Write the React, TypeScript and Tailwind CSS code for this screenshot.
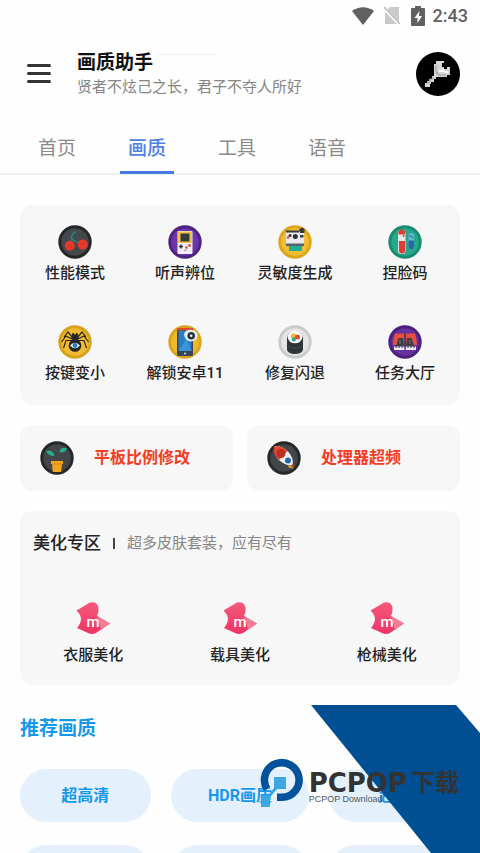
import type { ReactNode } from "react";

type IconProps = { children: ReactNode; rim: string; fill: string };

const Badge = ({ children, rim, fill }: IconProps) => (
  <svg viewBox="0 0 34 34" className="size-[34px] shrink-0" aria-hidden="true">
    <circle cx="17" cy="17" r="16.7" fill={rim} />
    <circle cx="17" cy="17" r="13.8" fill={fill} />
    {children}
  </svg>
);

const CherryIcon = () => (
  <Badge rim="#242627" fill="#45484a">
    <path d="M18 6.5C13.5 9 12.5 12 14.5 14.5S19 17 23 18M14.5 14.5 11.5 18" fill="none" stroke="#278177" strokeWidth="1.8" />
    <circle cx="11.8" cy="20.8" r="5" fill="#e5392c" />
    <circle cx="24.7" cy="19.6" r="5" fill="#e5392c" />
    <path d="m10.5 20 2 1M23.5 19l2 1" stroke="#b5342a" strokeWidth="1.2" />
  </Badge>
);

const ConsoleIcon = () => (
  <Badge rim="#4d2180" fill="#6d35ab">
    <rect x="9.5" y="6" width="15" height="23" rx="1" fill="#f2eef4" />
    <rect x="10" y="6.5" width="14" height="11.5" fill="#f1c542" />
    <rect x="12.5" y="8.5" width="9" height="8" fill="#343b40" />
    <path d="M11 21.5h4M13 19.5v4" stroke="#2b3140" strokeWidth="1.5" />
    <circle cx="21.5" cy="20.5" r="1.4" fill="#df4a48" />
    <circle cx="18.5" cy="22.5" r="1.3" fill="#df4a48" />
    <path d="m16 26 3-1.5" stroke="#98909f" />
  </Badge>
);

const PrinterIcon = () => (
  <Badge rim="#dda51d" fill="#f3bd33">
    <path d="M8 7h18v12H8z" fill="#e9eced" />
    <path d="M8 5.5h13v2H8zM21 4.5l3-2 2.5 1.5V8H22z" fill="#343b40" />
    <path d="M8 18.5h18V21H8z" fill="#53616a" />
    <path d="M11 21h13v5H11z" fill="#20ad92" />
    <circle cx="17.3" cy="11.5" r="2.5" fill="#293238" />
    <circle cx="12" cy="10.5" r="1.5" fill="#293238" />
    <circle cx="10" cy="12.5" r="1.3" fill="#df4a48" />
    <path d="M22 10h3.5v2.5H22z" fill="#343b40" />
  </Badge>
);

const TubesIcon = () => (
  <Badge rim="#188b72" fill="#25a98a">
    <rect x="10" y="5" width="7.5" height="24" rx="3.5" fill="#e7e9e8" />
    <path d="M10.5 6.5Q13.5 1.5 17 6.5v3h-6.5zM11 16h6v9.5a3 3 0 0 1-6 0z" fill="#df3d35" />
    <circle cx="15.7" cy="11" r="1" fill="#df3d35" />
    <rect x="20.5" y="8" width="5.5" height="16" rx="2.7" fill="#65b4cf" />
    <path d="M21 16h4.5v5.5a2.2 2.2 0 0 1-4.5 0zM21 10.5l4 2" fill="#2865ac" stroke="#2865ac" />
  </Badge>
);

const SpiderIcon = () => (
  <Badge rim="#d8a11b" fill="#f0bb30">
    <path
      d="M15 13 10 7 6 12M14 14 8 11 3.5 17M14 15.5H8L5.5 23M19 13l5-6 4 5M20 14l6-3 4.5 6M20 15.5h6l2.5 7.5"
      fill="none"
      stroke="#292722"
      strokeWidth="1.2"
    />
    <path d="M14.5 8h1.2l1.3 2 1.3-2h1.2l1.3 5-2 4h-3.6l-2-4z" fill="#242625" />
    <circle cx="17" cy="20.5" r="6.3" fill="#242625" />
    <path d="M12 20.5q5-5.5 10 0-5 5.5-10 0" fill="#f4f6f7" />
    <circle cx="17" cy="20.5" r="2.4" fill="#2d7cb9" />
  </Badge>
);

const PhoneIcon = () => (
  <Badge rim="#dba31b" fill="#efb82c">
    <rect x="9" y="3" width="16" height="28" rx="1.5" fill="#354654" />
    <path d="M9 3h16v2.5H9z" fill="#d84c2e" />
    <path d="M10.5 6h13v20h-13z" fill="#287fc5" />
    <path d="m10.5 26 8-12 5 12z" fill="#3c93d5" />
    <circle cx="17" cy="28.4" r="1" fill="#d8dfdf" />
    <path d="M16 9q2-5 8-4 6 1 5.5 6-1 5-7 5.5-6-1-6.5-7.5" fill="#e4f1f2" />
    <circle cx="23.2" cy="10.7" r="3.8" fill="#26343d" />
    <circle cx="23.2" cy="10.7" r="1.3" fill="#eef4f4" />
  </Badge>
);

const SushiIcon = () => (
  <Badge rim="#c9cbcb" fill="#e4e6e6">
    <path d="M9 13v12q1.5 4 8 4t8-4V13z" fill="#303638" />
    <ellipse cx="17" cy="13" rx="8" ry="6.8" fill="#303638" />
    <ellipse cx="17" cy="12" rx="7.4" ry="6.3" fill="#fbfbfa" />
    <circle cx="15.5" cy="10.8" r="2.6" fill="#f0b838" />
    <circle cx="19.5" cy="12" r="2.5" fill="#e34c37" />
    <circle cx="15.8" cy="14.4" r="2.1" fill="#2fa98a" />
    <path d="M10 21q7 4 14 0" stroke="#4a5153" fill="none" strokeWidth=".8" />
  </Badge>
);

const SneakersIcon = () => (
  <Badge rim="#4a217d" fill="#65319e">
    <path d="M7 8.5h9.3V20H5q0-6 2-11.5M17.7 8.5H27q2 5.5 2 11.5H17.7z" fill="#e84e3a" />
    <path d="M10.5 13H15l1 8H8zM19 13h4.5l2.5 8h-8z" fill="#393e43" />
    <path d="M6 21.5h10.3V25H6zM17.7 21.5H28V25H17.7z" fill="#eceae9" />
    <path d="M8 21v2M11 21v2M14 21v2M20 21v2M23 21v2M26 21v2M17 8v15" stroke="#3b3044" />
    <path d="M12 15v4M22 15v4" stroke="#747b7d" />
  </Badge>
);

const PlantIcon = () => (
  <Badge rim="#252728" fill="#434648">
    <path d="M6 10Q13.5 8.5 14.5 15 8.5 15.5 6 10M19.5 11.5Q20 5.5 27 7 26 12 19.5 11.5" fill="#25ad91" />
    <path d="M11 20h12v3h-1l-.8 8h-8.4L12 23h-1z" fill="#f1a51e" />
    <path d="M12 23h10" stroke="#cf8518" />
  </Badge>
);

const RocketIcon = () => (
  <Badge rim="#252728" fill="#434648">
    <path d="M7 5.5q8-1 14 5 5.5 5.5 5 14-8.5 0-14-5.5T7 5.5" fill="#eef0ef" />
    <path d="M7 5.5q8-1 13.5 4.5L12 19Q5.5 13 7 5.5" fill="#e54531" />
    <circle cx="14" cy="12.5" r="4.5" fill="#b83124" />
    <circle cx="21" cy="19.5" r="3" fill="#286aa8" />
    <path d="m24 25 3 2-1-5" fill="#d94330" />
    <path d="m22.5 24 4.5 4-6-2" fill="#efb034" />
  </Badge>
);

const BrandIcon = () => (
  <svg viewBox="0 0 34 34" className="size-[34px]" aria-hidden="true">
    <defs>
      <linearGradient id="pink" x1="0" y1="0" x2="0" y2="1">
        <stop stopColor="#f5597c" />
        <stop offset="1" stopColor="#ed3564" />
      </linearGradient>
    </defs>
    <path d="M.5 9.5 14 1.5Q21 0 22.5 6.5 23 11 21 15L34 22.5 20 32q-4 2-8 0L1 27q4-5 4-9T.5 9.5" fill="url(#pink)" />
    <path d="M21 15 34 22.5 25 28.5z" fill="#f47c96" />
    <text x="17" y="26" textAnchor="middle" fontSize="15" fontWeight="500" fill="#fff" fontFamily="Roboto, sans-serif">
      m
    </text>
  </svg>
);

const tabs = ["首页", "画质", "工具", "语音"];

const features = [
  { label: "性能模式", icon: <CherryIcon /> },
  { label: "听声辨位", icon: <ConsoleIcon /> },
  { label: "灵敏度生成", icon: <PrinterIcon /> },
  { label: "捏脸码", icon: <TubesIcon /> },
  { label: "按键变小", icon: <SpiderIcon /> },
  { label: "解锁安卓11", icon: <PhoneIcon /> },
  { label: "修复闪退", icon: <SushiIcon /> },
  { label: "任务大厅", icon: <SneakersIcon /> },
];

const shortcuts = [
  { label: "平板比例修改", icon: <PlantIcon /> },
  { label: "处理器超频", icon: <RocketIcon /> },
];

const skins = ["衣服美化", "载具美化", "枪械美化"];
const qualities = ["超高清", "HDR画质", "超清"];

const StatusBar = () => (
  <div className="flex h-8 items-center justify-end pr-3 text-[#616161]">
    <svg viewBox="0 0 24 20" className="h-5 w-6" aria-hidden="true">
      <path d="M1 5Q12-2.5 23 5L12 19z" fill="currentColor" />
    </svg>
    <svg viewBox="0 0 18 20" className="ml-2 h-5 w-[18px]" aria-hidden="true">
      <path d="M7 1h9v17H2V6z" fill="#c9c9c9" />
      <path d="m0 1 17 18" stroke="#fff" strokeWidth="3" />
      <path d="m1 1 16 17" stroke="#b5b5b5" strokeWidth="1.3" />
    </svg>
    <svg viewBox="0 0 14 20" className="ml-2.5 h-5 w-3.5" aria-hidden="true">
      <path d="M4 0h6v2h3q1 0 1 1v16q0 1-1 1H1q-1 0-1-1V3q0-1 1-1h3z" fill="currentColor" />
      <path d="M8.5 5 3.5 12h3v5l4.5-7H8z" fill="#fff" />
    </svg>
    <span className="ml-2 text-lg font-medium">2:43</span>
  </div>
);

const Header = () => (
  <header className="flex h-[83px] items-center pl-[27px] pr-5">
    <button type="button" aria-label="菜单" className="flex w-6 flex-col gap-[5px]">
      <span className="h-[3px] w-full rounded-full bg-[#333]" />
      <span className="h-[3px] w-full rounded-full bg-[#333]" />
      <span className="h-[3px] w-full rounded-full bg-[#333]" />
    </button>
    <div className="ml-[26px] flex-1">
      <div className="flex">
        <h1 className="text-[19px] leading-[26px] font-bold text-[#111]">画质助手</h1>
        <span className="ml-1 mt-1 h-px w-[60px] bg-[#eee]" />
      </div>
      <p className="text-[15px] leading-[22px] text-[#858585]">贤者不炫己之长，君子不夺人所好</p>
    </div>
    <svg viewBox="0 0 44 44" className="size-11 shrink-0" aria-hidden="true">
      <circle cx="22" cy="22" r="22" fill="#000" />
      <path
        d="M20 9h8v2h-2v4h2v2h3v-2h3v8h-3v2H20v2h-2v3h-3v2h-1v3H9v-4h2v-2h2v-2h3v-3h2V12h2z"
        fill="#d6d6d6"
      />
      <path d="M20 13v8h2v2h8M17 25v2h-3v3h-2v2" fill="none" stroke="#999" strokeWidth="1" />
      <path d="M23 19h4v-2M28 20h4" stroke="#fff" strokeWidth="2" fill="none" />
    </svg>
  </header>
);

const Tabs = () => (
  <nav className="flex h-[60px] border-b-2 border-[#f1f1f1] pl-3">
    {tabs.map((tab) => (
      <div key={tab} className="-mb-px flex w-[90px] justify-center">
        <button
          type="button"
          className={
            tab === "画质"
              ? "border-b-[3px] border-[#477be5] px-2 pt-3 text-[19px] font-medium text-[#4d80e8]"
              : "border-b-[3px] border-transparent px-2 pt-3 text-[19px] text-[#8a8a8a]"
          }
        >
          {tab}
        </button>
      </div>
    ))}
  </nav>
);

const Watermark = () => (
  <div className="pointer-events-none absolute right-0 bottom-0">
    <svg viewBox="0 0 170 148" className="h-[148px] w-[170px]" aria-hidden="true">
      <path d="M1 0h145l24 28v120h-49z" fill="#004f93" />
    </svg>
    <div className="absolute right-[21px] bottom-11 flex items-start whitespace-nowrap text-[#333]">
      <svg viewBox="0 0 48 54" className="mr-0.5 h-[54px] w-12 shrink-0" aria-hidden="true">
        <path d="M8 34A17.3 17.3 0 1 1 23 42.3H18" fill="none" stroke="#00539a" strokeWidth="7.5" />
        <path d="m17 33-7 8" stroke="#3ca5e2" strokeWidth="3" />
        <path d="M15 22h12v12H15zM2 41h9v11H2z" fill="#3ca5e2" />
      </svg>
      <div className="pt-[18px]">
        <div className="flex items-center font-['DejaVu_Sans','Noto_Sans_CJK_SC',sans-serif] text-[26px] leading-5 font-bold">
          PCPOP<span className="ml-1 text-2xl leading-5">下载</span>
        </div>
        <div className="font-['Liberation_Sans',sans-serif] text-[9px] leading-3 text-[#555]">PCPOP Download</div>
      </div>
    </div>
  </div>
);

const App = () => (
  <div className="relative h-screen overflow-hidden bg-[#fefefe] font-[Roboto,'Noto_Sans_CJK_SC',sans-serif]">
    <StatusBar />
    <Header />
    <Tabs />

    <main className="px-5 pt-[30px]">
      <section className="grid grid-cols-4 gap-y-[38px] rounded-xl bg-[#f7f7f7] pt-5 pb-[18px]">
        {features.map(({ label, icon }) => (
          <button key={label} type="button" className="flex flex-col items-center text-[15px] leading-7 font-medium text-[#222]">
            {icon}
            {label}
          </button>
        ))}
      </section>

      <section className="mt-5 grid grid-cols-2 gap-[14px]">
        {shortcuts.map(({ label, icon }) => (
          <button
            key={label}
            type="button"
            className="flex h-[66px] items-center gap-5 rounded-xl bg-[#f7f7f7] pl-5 text-base font-bold text-[#f43c24]"
          >
            {icon}
            {label}
          </button>
        ))}
      </section>

      <section className="mt-5 rounded-xl bg-[#f7f7f7] pt-5 pb-4">
        <div className="flex items-center pl-[13px] leading-6">
          <h2 className="text-[17px] font-medium text-[#222]">美化专区</h2>
          <span className="mx-3 h-[11px] w-0.5 bg-[#444]" />
          <p className="text-[15px] text-[#858585]">超多皮肤套装，应有尽有</p>
        </div>
        <div className="mt-[46px] grid grid-cols-3">
          {skins.map((skin) => (
            <button key={skin} type="button" className="flex flex-col items-center gap-1.5 text-[15px] leading-7 font-medium text-[#222]">
              <BrandIcon />
              {skin}
            </button>
          ))}
        </div>
      </section>

      <h2 className="mt-7 text-[19px] leading-8 font-bold text-[#1698ea]">推荐画质</h2>
      <div className="mt-6 grid grid-cols-[130fr_138fr_130fr] gap-x-5 gap-y-[23px]">
        {qualities.map((quality) => (
          <button key={quality} type="button" className="h-[53px] rounded-full bg-[#e4f1fc] text-base font-bold text-[#1698ea]">
            {quality}
          </button>
        ))}
        {qualities.map((quality) => (
          <div key={quality} className="h-[53px] rounded-full bg-[#e4f1fc]" />
        ))}
      </div>
    </main>

    <Watermark />
  </div>
);

export default App;
